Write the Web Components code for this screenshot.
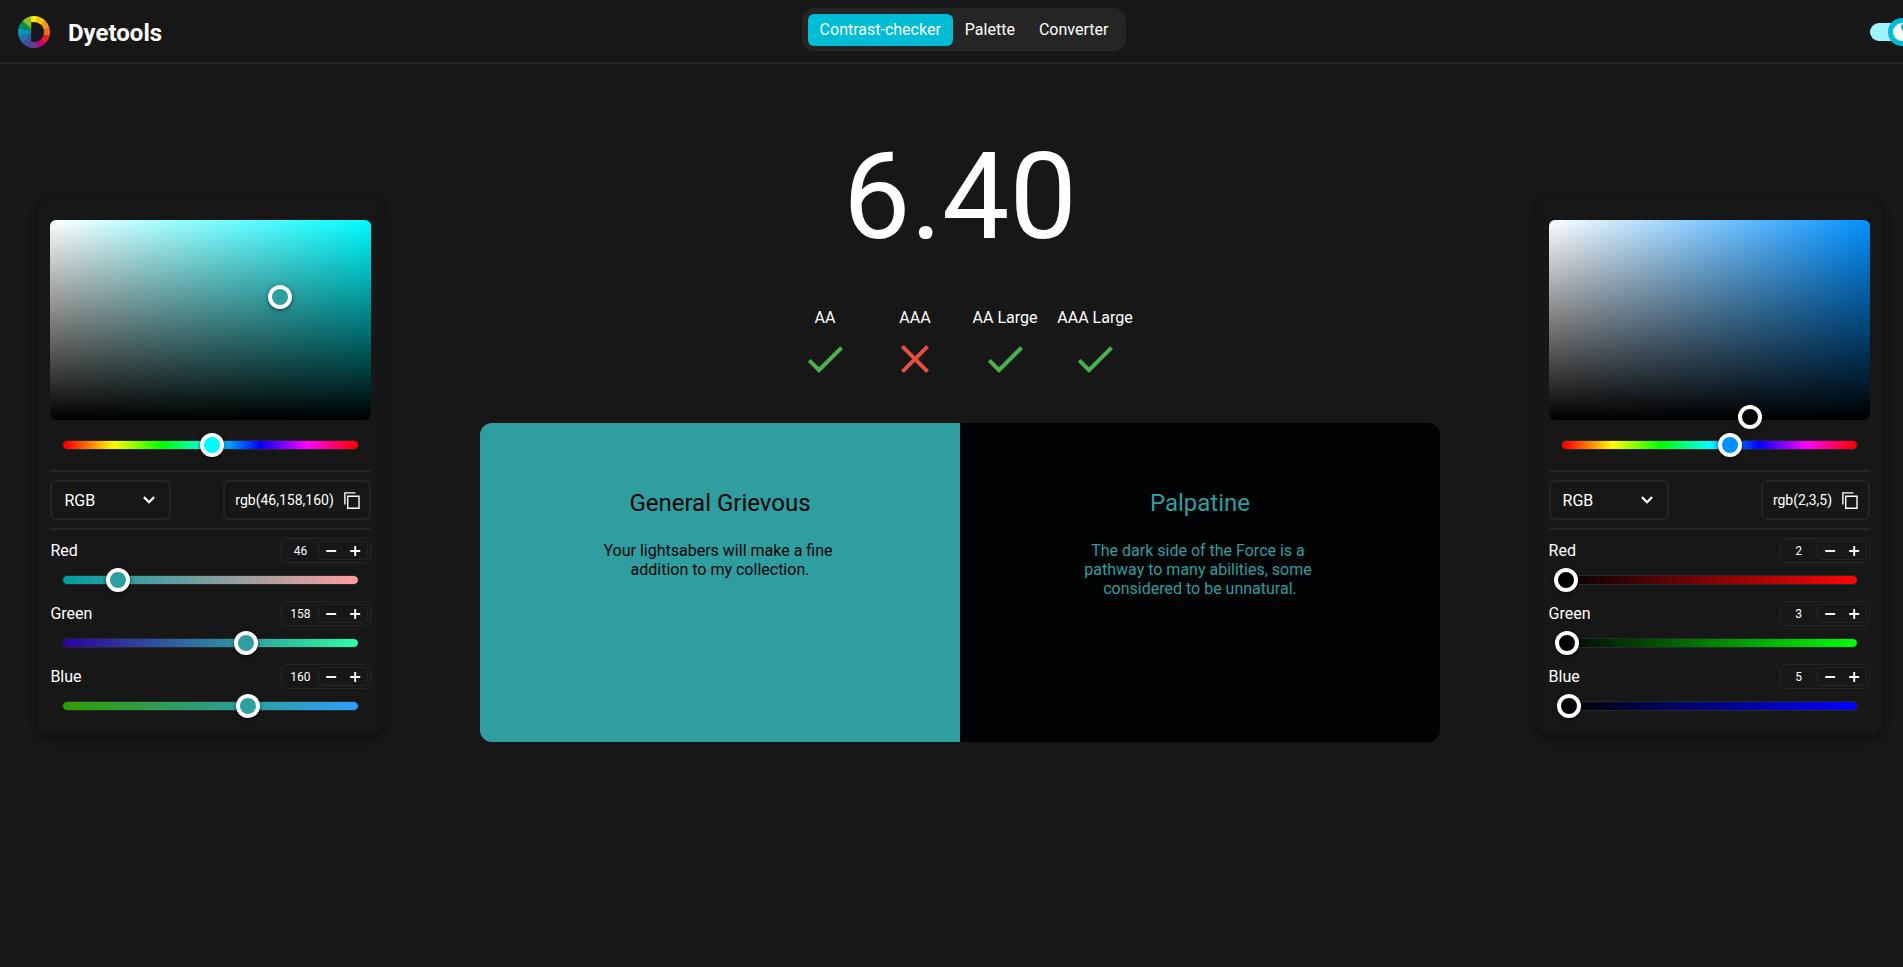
<!DOCTYPE html>
<html lang="en">
<head>
<meta charset="utf-8">
<title>Dyetools</title>
<style>
html, body { margin: 0; height: 100%; overflow: hidden; background: #171717; }
body { font-family: Roboto, "Liberation Sans", sans-serif; font-size: 16px; color: #fff; }
</style>
</head>
<body>
<dye-app></dye-app>
<script>
function define(name, render) {
  customElements.define(name, class extends HTMLElement {
    connectedCallback() {
      if (this.shadowRoot) return;
      this.attachShadow({ mode: 'open' }).innerHTML = '<style>*{box-sizing:border-box}</style>' + render(this);
    }
  });
}

/* Twelve-slice colour wheel with a D-shaped opening */
define('dye-logo', () => {
  const colors = ['#f9e900', '#fdc60b', '#f6921e', '#ee6a25', '#e32322', '#c5037d', '#6f3a8e', '#454f9f', '#2b71b2', '#0696bb', '#008e5b', '#8cbb26'];
  const pt = a => (16 * Math.sin(a * Math.PI / 180)).toFixed(2) + ' ' + (-16 * Math.cos(a * Math.PI / 180)).toFixed(2);
  const slices = colors.map((c, i) => `<path fill="${c}" d="M0 0L${pt(i * 30 - 15)}A16 16 0 0 1 ${pt(i * 30 + 15.5)}Z"/>`).join('');
  return `<style>:host{display:block;width:32px;height:32px} svg{display:block}</style>
  <svg width="32" height="32" viewBox="-16 -16 32 32">${slices}<path fill="#171717" d="M-2.8 -9.6A10 10 0 1 1 -2.8 9.6Z"/></svg>`;
});

define('dye-tab', el => `<style>
  :host{display:block;height:32px;line-height:32px;padding:0 12px;border-radius:6px;color:#fff;white-space:nowrap}
  :host([active]){background:#00bcd4}
  </style><slot></slot>`);

define('theme-toggle', () => `<style>
  :host{display:flex;align-items:center;width:50px;height:18px;border-radius:9px;background:#9cf4ff}
  .knob{flex:none;margin-left:18px;width:28px;height:28px;border-radius:50%;border:5px solid #00bcd4;background:#fff;display:grid;place-items:center}
  </style><div class="knob"><svg width="12" height="12" viewBox="0 0 24 24" style="transform:translate(3.5px,-5px)"><path fill="#00bcd4" d="M12 3a9 9 0 1 0 9 9c0-.46-.04-.92-.1-1.36A5.4 5.4 0 1 1 13.36 3.1 9 9 0 0 0 12 3z"/></svg></div>`);

define('dye-header', () => `<style>
  :host{display:grid;grid-template-columns:801.6px auto 1fr;height:64px;border-bottom:2px solid #252525}
  .brand{display:flex;align-items:center;gap:18px;padding-left:18px;padding-top:2px}
  .brand b{font-size:24px;line-height:28px;padding-top:2px}
  nav{display:flex;align-self:start;margin-top:8px;height:43px;padding:6px 6px 5px;border-radius:12px;background:#252525}
  .end{display:flex;align-items:center;padding-top:2px;justify-self:end;width:50px}
  </style>
  <div class="brand"><dye-logo></dye-logo><b>Dyetools</b></div>
  <nav><dye-tab active>Contrast-checker</dye-tab><dye-tab>Palette</dye-tab><dye-tab>Converter</dye-tab></nav>
  <div class="end"><theme-toggle></theme-toggle></div>`);

/* Round handle; x and y give its centre inside the parent */
define('color-thumb', el => `<style>
  :host{display:block;position:absolute;width:24px;height:24px;border-radius:50%;border:4px solid #fff;box-sizing:border-box;
    background:${el.getAttribute('fill')};left:${el.getAttribute('x') - 12}px;top:${el.getAttribute('y') - 12}px;box-shadow:0 1px 4px rgba(0,0,0,.6)}
  </style>`);

define('color-field', el => `<style>
  :host{display:block;position:relative;height:200px;border-radius:6px;
    background:linear-gradient(to top,#000,transparent),linear-gradient(to right,#fff,${el.getAttribute('hue')})}
  </style><slot></slot>`);

define('color-track', el => `<style>
  :host{display:block;position:relative;height:10px;margin:0 12px;border-radius:5px;box-sizing:border-box;border:1px solid #292929;
    background:linear-gradient(to right,${el.getAttribute('stops')}) padding-box}
  </style><slot></slot>`);

define('number-stepper', () => `<style>
  :host{display:flex;box-sizing:border-box;width:90px;height:25px;border:1px solid #252525;border-radius:6px;padding:2px;font-size:12px}
  .n{flex:1;text-align:center;line-height:20px;padding-right:2px}
  .btns{display:flex;width:50px;height:19px;border:1px solid #252525;border-radius:4px}
  .btns svg{width:24px;height:17px}
  </style><div class="n"><slot></slot></div>
  <div class="btns"><svg viewBox="0 0 24 17"><path d="M7.200 9H17.200" stroke="#fff" stroke-width="1.900"/></svg><svg viewBox="0 0 24 17"><path d="M7.200 9H17.200M12.200 4V14" stroke="#fff" stroke-width="1.900"/></svg></div>`);

define('channel-row', el => `<style>
  :host{display:block;height:63px}
  .top{display:flex;justify-content:space-between;align-items:center;height:25px;margin-bottom:12px}
  </style>
  <div class="top"><span>${el.getAttribute('label')}</span><number-stepper>${el.getAttribute('value')}</number-stepper></div>
  <color-track stops="${el.getAttribute('stops')}"><color-thumb x="${el.getAttribute('x')}" y="4" fill="${el.getAttribute('fill')}"></color-thumb></color-track>`);

const pickers = {
  left: { hue: '#00fbff', hueX: 149, fx: 230, fy: 77, code: 'rgb(46,158,160)', fill: 'rgb(46,158,160)', rows: [
    ['Red', 46, 'rgb(0,158,160),rgb(255,158,160)', 55], ['Green', 158, 'rgb(46,0,160),rgb(46,255,160)', 183], ['Blue', 160, 'rgb(46,158,0),rgb(46,158,255)', 185]] },
  right: { hue: '#0091ff', hueX: 168, fx: 201, fy: 197, code: 'rgb(2,3,5)', fill: 'rgb(2,3,5)', rows: [
    ['Red', 2, 'rgb(0,3,5),rgb(255,3,5)', 4], ['Green', 3, 'rgb(2,0,5),rgb(2,255,5)', 5], ['Blue', 5, 'rgb(2,3,0),rgb(2,3,255)', 7]] }
};

define('color-picker', el => {
  const p = pickers[el.getAttribute('side')];
  return `<style>
  :host{display:block;box-sizing:border-box;width:345px;height:535px;padding:20px 12px 0;border-radius:12px;background:#171717;box-shadow:0 3px 8px rgba(0,0,0,.4)}
  color-track.hue{margin-top:20px;margin-bottom:20px}
  .tools{display:flex;justify-content:space-between;align-items:center;height:60px;border:solid #252525;border-width:2px 0}
  .box{display:flex;align-items:center;height:40px;border:2px solid #252525;border-radius:6px}
  .select{width:120.4px;justify-content:space-between;padding:0 14px 0 12px}
  .code{font-size:14px;padding:0 9.300px 0 10px;gap:10.300px}
  .rows{padding-top:8px}
  svg{display:block;flex:none}
  </style>
  <color-field hue="${p.hue}"><color-thumb x="${p.fx}" y="${p.fy}" fill="${p.fill}"></color-thumb></color-field>
  <color-track class="hue" stops="#f00 1%,#ff0 17.2%,#0f0 33.4%,#0ff 50%,#00f 66.600%,#f0f 82.800%,#f00 99%"><color-thumb x="${p.hueX}" y="4" fill="${p.hue}"></color-thumb></color-track>
  <div class="tools">
    <div class="box select"><span>RGB</span><svg width="12" height="8" viewBox="0 0 12 8"><path d="M.9 1.1L6 6.2L11.1 1.1" fill="none" stroke="#fff" stroke-width="2.200"/></svg></div>
    <div class="box code"><span>${p.code}</span><svg width="16" height="17" viewBox="0 0 16 17"><path d="M.9 12.500V.9H11.400M3.700 4.200H15V16.200H3.700Z" fill="none" stroke="#fff" stroke-width="1.400"/></svg></div>
  </div>
  <div class="rows">${p.rows.map(r => `<channel-row label="${r[0]}" value="${r[1]}" stops="${r[2]}" x="${r[3]}" fill="${p.fill}"></channel-row>`).join('')}</div>`;
});

define('wcag-result', el => `<style>
  :host{display:flex;flex-direction:column;align-items:center;width:90px;gap:8px;line-height:19px;white-space:nowrap}
  svg{display:block}
  </style><slot></slot><svg width="48" height="48" viewBox="0 0 24 24">${el.hasAttribute('pass')
    ? '<path fill="#4caf50" d="M9 16.170L4.830 12l-1.420 1.410L9 19 21 7l-1.410-1.410z"/>'
    : '<path fill="#e5503f" d="M19 6.410L17.590 5 12 10.590 6.410 5 5 6.410 10.590 12 5 17.590 6.410 19 12 13.410 17.590 19 19 17.590 13.410 12z"/>'}</svg>`);

define('preview-pane', () => `<style>
  :host{display:block;box-sizing:border-box;flex:1;padding-top:66px;text-align:center}
  .title{font-size:24px;line-height:28px;margin-bottom:24px}
  .body{line-height:19px}
  </style><div class="title"><slot name="title"></slot></div><div class="body"><slot></slot></div>`);

define('contrast-view', () => `<style>
  :host{display:flex;flex-direction:column;align-items:center;width:960px}
  .score{font-size:120px;line-height:140px;margin-top:63px}
  .results{display:flex;margin-top:41px}
  .preview{display:flex;width:960px;height:319px;margin-top:40px;border-radius:12px;overflow:hidden}
  .a{background:#2e9ea0;color:#020305}
  .b{background:#020305;color:#2e9ea0}
  </style>
  <div class="score">6.40</div>
  <div class="results"><wcag-result pass>AA</wcag-result><wcag-result>AAA</wcag-result><wcag-result pass>AA Large</wcag-result><wcag-result pass>AAA Large</wcag-result></div>
  <div class="preview">
    <preview-pane class="a"><span slot="title">General Grievous</span>Your lightsabers will make a fine&nbsp;<br>addition to my collection.</preview-pane>
    <preview-pane class="b"><span slot="title">Palpatine</span>The dark side of the Force is a&nbsp;<br>pathway to many abilities, some&nbsp;<br>considered to be unnatural.</preview-pane>
  </div>`);

define('dye-app', () => `<style>
  :host{display:block;width:1920px}
  main{display:flex;justify-content:space-between;align-items:flex-start;padding:0 38.4px}
  color-picker{margin-top:136px}
  </style>
  <dye-header></dye-header>
  <main><color-picker side="left"></color-picker><contrast-view></contrast-view><color-picker side="right"></color-picker></main>`);
</script>
</body>
</html>
